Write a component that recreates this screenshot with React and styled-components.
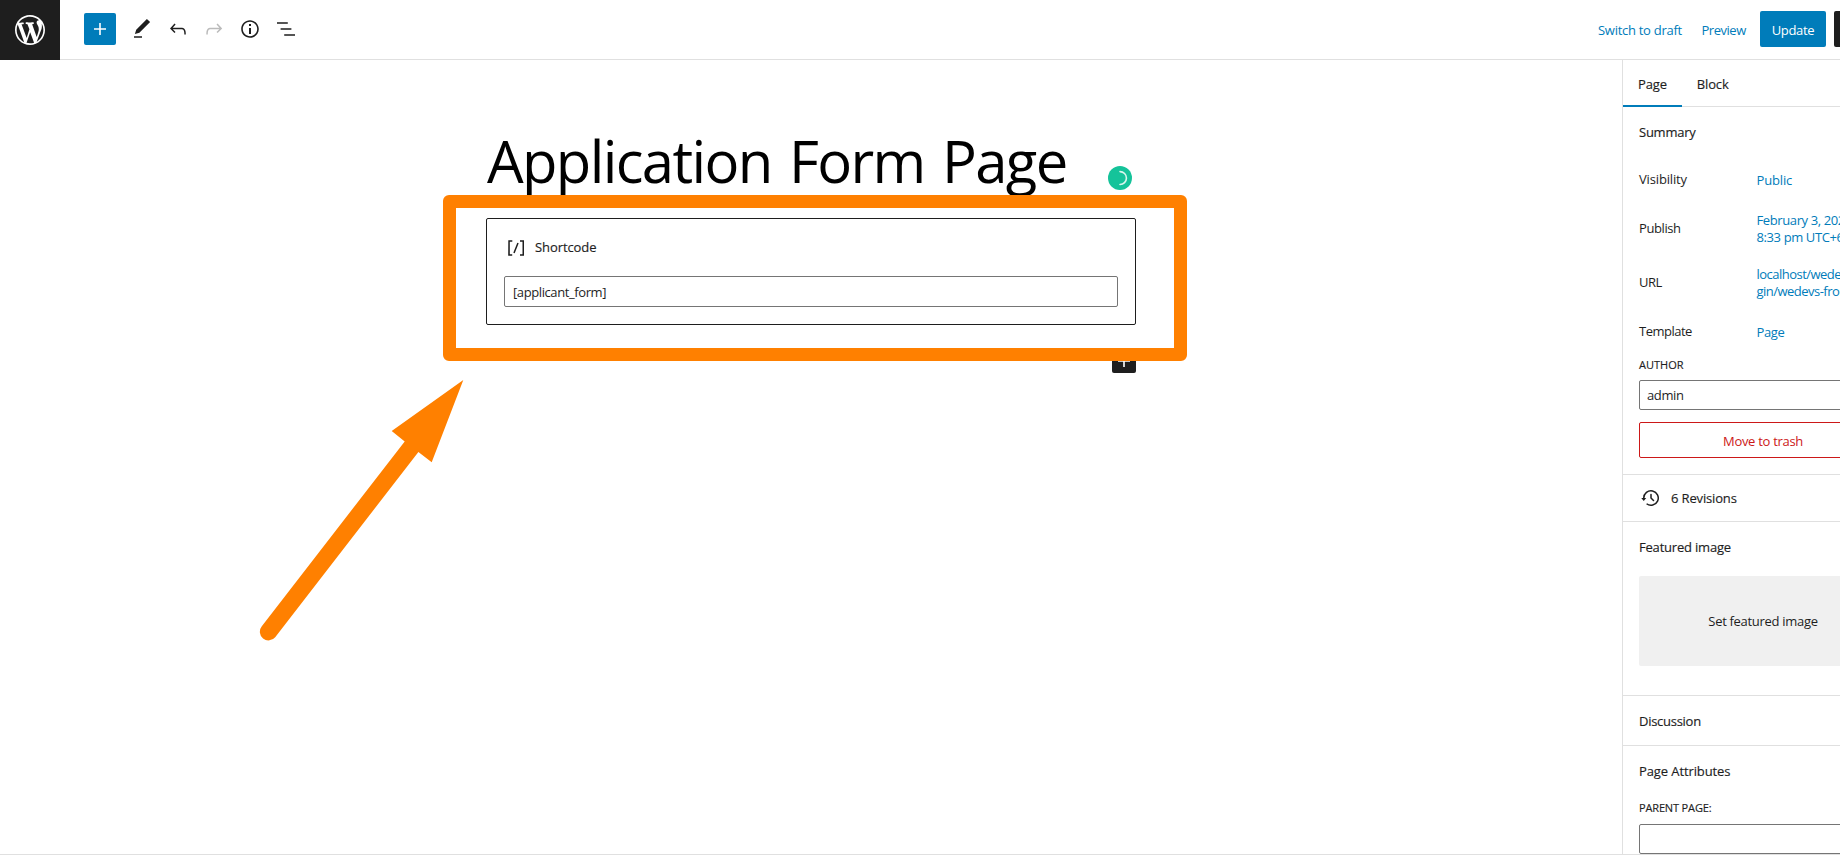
import React from "react";
import styled, { createGlobalStyle } from "styled-components";

const GlobalStyle = createGlobalStyle`
  *, *::before, *::after { box-sizing: border-box; }
  html, body { margin: 0; background: #fff; overflow: hidden; }
  body {
    font-family: "Open Sans", "Noto Sans", sans-serif;
    font-size: 13px;
    color: #1e1e1e;
  }
  button, input { font: inherit; color: inherit; letter-spacing: inherit; margin: 0; }
`;

const BLUE = "#007cba";
const LINE = "#e0e0e0";

const Editor = styled.div`
  position: relative;
  display: flex;
  flex-direction: column;
  width: 1840px;
  height: 863px;
  overflow: hidden;
  background: #fff;
`;

const Header = styled.header`
  display: flex;
  align-items: center;
  flex: none;
  height: 60px;
  border-bottom: 1px solid ${LINE};
`;

const SiteButton = styled.a`
  display: flex;
  align-items: center;
  justify-content: center;
  width: 60px;
  height: 60px;
  margin-bottom: -1px;
  align-self: flex-start;
  background: #1e1e1e;
  color: #fff;
`;

const Tools = styled.div`
  display: flex;
  align-items: center;
  gap: 12px;
  margin: -1px 0 0 24px;
`;

const Inserter = styled.button`
  display: flex;
  align-items: center;
  justify-content: center;
  width: 32px;
  height: 32px;
  margin-right: 2px;
  padding: 0;
  border: 0;
  border-radius: 2px;
  background: ${BLUE};
  color: #fff;
`;

const ToolButton = styled.button`
  display: flex;
  width: 24px;
  height: 24px;
  padding: 0;
  border: 0;
  background: none;
  color: ${(p) => (p.$muted ? "#bbb" : "#1e1e1e")};
`;

const Actions = styled.div`
  display: flex;
  align-items: center;
  gap: 20px;
  width: 242px;
  margin: -2px 0 0 auto;
  overflow: hidden;
`;

const LinkButton = styled.button`
  flex: none;
  width: ${(p) => p.$width}px;
  height: 36px;
  padding: 2px 0 0;
  border: 0;
  background: none;
  color: ${BLUE};
  text-align: left;
  white-space: nowrap;
  letter-spacing: ${(p) => p.$track}px;
`;

const UpdateButton = styled.button`
  flex: none;
  width: 66px;
  height: 36px;
  margin-left: -6px;
  padding: 2px 0 0;
  border: 0;
  border-radius: 2px;
  background: ${BLUE};
  color: #fff;
  letter-spacing: -0.3px;
`;

const SettingsToggle = styled.span`
  flex: none;
  width: 36px;
  height: 36px;
  margin-left: -12px;
  border-radius: 2px;
  background: #1e1e1e;
`;

const Body = styled.div`
  display: flex;
  flex: none;
  height: 795px;
  border-bottom: 1px solid ${LINE};
`;

const Canvas = styled.main`
  width: 1622px;
  padding-top: 60px;
`;

const Content = styled.div`
  position: relative;
  width: 650px;
  margin-left: 486px;
`;

const Title = styled.h1`
  height: 98px;
  margin: 0;
  padding-left: 1px;
  color: #000;
  font-size: 58px;
  font-weight: 400;
  line-height: 82px;
  letter-spacing: -1.65px;
  word-spacing: 4px;
  white-space: nowrap;
`;

const Shortcode = styled.section`
  height: 107px;
  padding: 16px 17px;
  border: 1px solid #1e1e1e;
  border-radius: 2px;
`;

const BlockLabel = styled.div`
  display: flex;
  align-items: center;
  gap: 7px;
  height: 26px;
  margin-bottom: 15px;
  line-height: 22px;
  letter-spacing: -0.08px;
  -webkit-text-stroke: 0.15px currentColor;
`;

const BlockName = styled.span`
  height: 24px;
`;

const Input = styled.input`
  display: block;
  width: 100%;
  height: ${(p) => p.$height}px;
  padding: ${(p) => p.$pad};
  border: 1px solid #757575;
  border-radius: 2px;
  background: #fff;
  letter-spacing: -0.4px;
  outline: none;
`;

const Checker = styled.span`
  position: absolute;
  top: 46px;
  right: 4px;
  display: flex;
  width: 24px;
  height: 24px;
  border-radius: 50%;
  background: #15c39a;
`;

const Appender = styled.button`
  display: flex;
  width: 24px;
  height: 24px;
  margin: 24px 0 0 auto;
  padding: 0;
  border: 0;
  border-radius: 2px;
  background: #1e1e1e;
  color: #fff;
`;

const Highlight = styled.div`
  position: absolute;
  top: 195px;
  left: 443px;
  width: 744px;
  height: 166px;
  border: 13px solid #ff8000;
  border-radius: 6px;
`;

const Pointer = styled.svg`
  position: absolute;
  top: 380px;
  left: 258px;
`;

const Sidebar = styled.aside`
  width: 218px;
  overflow: hidden;
  border-left: 1px solid ${LINE};
`;

const SidebarInner = styled.div`
  width: 280px;
`;

const Tabs = styled.div`
  display: flex;
  height: 47px;
  border-bottom: 1px solid ${LINE};
`;

const Tab = styled.button`
  height: 47px;
  padding: 0 15px 0;
  border: 0;
  background: none;
  letter-spacing: -0.15px;
  -webkit-text-stroke: 0.15px currentColor;
  box-shadow: ${(p) => (p.$active ? `inset 0 -2px 0 0 ${BLUE}` : "none")};
`;

const Panel = styled.section`
  padding: 0 16px ${(p) => p.$bottom || 0}px;
  border-bottom: 1px solid ${LINE};
`;

const PanelTitle = styled.h2`
  display: flex;
  align-items: center;
  height: ${(p) => p.$height || 50}px;
  margin: 0;
  font-size: 13px;
  font-weight: 400;
  letter-spacing: ${(p) => p.$track}px;
  -webkit-text-stroke: 0.15px currentColor;
`;

const Row = styled.div`
  display: flex;
  align-items: center;
  height: ${(p) => p.$height}px;
`;

const RowLabel = styled.span`
  width: 117.5px;
  flex: none;
  padding-bottom: 2px;
  letter-spacing: ${(p) => p.$track}px;
`;

const RowValue = styled.a`
  display: flex;
  flex-direction: column;
  padding-top: 1px;
  color: ${BLUE};
  line-height: 17px;
  white-space: nowrap;
  letter-spacing: ${(p) => p.$track}px;
`;

const FieldLabel = styled.label`
  display: block;
  height: ${(p) => p.$height}px;
  font-size: 11px;
  line-height: 24px;
  letter-spacing: ${(p) => p.$track || 0}px;
  text-transform: uppercase;
  -webkit-text-stroke: 0.15px currentColor;
`;

const TrashButton = styled.button`
  width: 100%;
  height: 36px;
  margin-top: 12px;
  padding: 2px 0 0;
  border: 1px solid #cc1818;
  border-radius: 2px;
  background: none;
  color: #cc1818;
  letter-spacing: -0.3px;
`;

const Revisions = styled.div`
  display: flex;
  align-items: center;
  gap: 8px;
  height: 46px;
  letter-spacing: -0.15px;
  -webkit-text-stroke: 0.15px currentColor;
`;

const FeaturedButton = styled.button`
  width: 100%;
  height: 90px;
  margin-top: 4px;
  padding: 0 0 1px;
  border: 0;
  border-radius: 2px;
  background: #f0f0f0;
  letter-spacing: -0.3px;
`;

function Icon({ d, size = 24, viewBox = "0 0 24 24" }) {
  return (
    <svg width={size} height={size} viewBox={viewBox} fill="currentColor" stroke="none" aria-hidden="true">
      <path d={d} />
    </svg>
  );
}

const icons = {
  wordpress:
    "M20 10c0-5.51-4.49-10-10-10C4.48 0 0 4.49 0 10c0 5.52 4.48 10 10 10 5.51 0 10-4.48 10-10zM7.78 15.37L4.37 6.22c.55-.02 1.17-.08 1.17-.08.5-.06.44-1.13-.06-1.11 0 0-1.45.11-2.37.11-.18 0-.37 0-.58-.01C4.12 2.69 6.87 1.11 10 1.11c2.33 0 4.45.87 6.05 2.34-.68-.11-1.65.39-1.65 1.58 0 .74.45 1.36.9 2.1.35.61.55 1.36.55 2.46 0 1.49-1.4 5-1.4 5l-3.03-8.37c.54-.02.82-.17.82-.17.5-.05.44-1.25-.06-1.22 0 0-1.44.12-2.38.12-.87 0-2.33-.12-2.33-.12-.5-.03-.56 1.2-.06 1.22l.92.08 1.26 3.41zM17.41 10c.24-.64.74-1.87.43-4.25.7 1.29 1.05 2.71 1.05 4.25 0 3.29-1.73 6.24-4.4 7.78.97-2.59 1.94-5.2 2.92-7.78zM6.1 18.09C3.12 16.65 1.11 13.53 1.11 10c0-1.3.23-2.48.72-3.59C3.25 10.3 4.67 14.2 6.1 18.09zm4.03-6.63l2.58 6.98c-.86.29-1.76.45-2.71.45-.79 0-1.57-.11-2.29-.33.81-2.38 1.62-4.74 2.42-7.1z",
  plus: "M18 11.2h-5.2V6h-1.6v5.2H6v1.6h5.2V18h1.6v-5.2H18z",
  edit: "M20.1 5.1L16.9 2 6.2 12.7l-1.3 4.4 4.5-1.3L20.1 5.1zM4 20.8h8v-1.5H4v1.5z",
  undo: "M18.3 11.7c-.6-.6-1.4-.9-2.3-.9H6.7l2.9-3.3-1.1-1-4.5 5L8.5 16l1-1-2.7-2.7H16c.5 0 .9.2 1.3.5 1 1 1 3.4 1 4.5v.3h1.5v-.2c0-1.5 0-4.3-1.5-5.7z",
  redo: "M15.6 6.5l-1.1 1 2.9 3.3H8c-.9 0-1.7.3-2.3.9-1.4 1.5-1.4 4.2-1.4 5.6v.2h1.5v-.3c0-1.1 0-3.5 1-4.5.3-.3.7-.5 1.3-.5h9.2L14.5 15l1.1 1.1 4.6-4.6-4.6-5z",
  info: "M12 3.2c-4.8 0-8.8 3.9-8.8 8.8 0 4.8 3.9 8.8 8.8 8.8 4.8 0 8.8-3.9 8.8-8.8 0-4.8-4-8.8-8.8-8.8zm0 16c-4 0-7.2-3.3-7.2-7.2C4.8 8 8 4.8 12 4.8s7.2 3.3 7.2 7.2c0 4-3.2 7.2-7.2 7.2zM11 17h2v-6h-2v6zm0-8h2V7h-2v2z",
  list: "M13.8 5.2H3v1.5h10.8V5.2zm-3.6 12v1.5H21v-1.5H10.2zm7.2-6H6.6v1.5h10.8v-1.5z",
  shortcode:
    "M16 4.2v1.5h2.5v12.5H16v1.5h4V4.2h-4zM4.2 19.8h4v-1.5H5.8V5.8h2.5V4.2h-4l-.1 15.6zm5.1-3.1l1.4.6 4-10-1.4-.6-4 10z",
  backup:
    "M5.5 12h1.75l-2.5 3-2.5-3H4a8 8 0 113.134 6.35l.907-1.194A6.5 6.5 0 105.5 12zm9.53 1.97l-2.28-2.28V8.5a.75.75 0 00-1.5 0V12a.747.747 0 00.218.529l1.282-.84-1.28.842 2.5 2.5a.75.75 0 101.06-1.061z",
};

const summary = [
  { label: "Visibility", track: -0.15, height: 45, value: ["Public"], valueTrack: -0.15 },
  { label: "Publish", track: -0.4, height: 53, value: ["February 3, 2023", "8:33 pm UTC+6"], valueTrack: -0.39 },
  { label: "URL", track: -0.5, height: 55, value: ["localhost/wedevs-plu", "gin/wedevs-frontend"], valueTrack: -0.52 },
  { label: "Template", track: -0.5, height: 43, value: ["Page"], valueTrack: -0.4 },
];

export default function App() {
  return (
    <Editor>
      <GlobalStyle />
      <Header>
        <SiteButton>
          <Icon d={icons.wordpress} size={36} viewBox="-2 -2 24 24" />
        </SiteButton>
        <Tools>
          <Inserter>
            <Icon d={icons.plus} />
          </Inserter>
          <ToolButton>
            <Icon d={icons.edit} />
          </ToolButton>
          <ToolButton>
            <Icon d={icons.undo} />
          </ToolButton>
          <ToolButton $muted>
            <Icon d={icons.redo} />
          </ToolButton>
          <ToolButton>
            <Icon d={icons.info} />
          </ToolButton>
          <ToolButton>
            <Icon d={icons.list} />
          </ToolButton>
        </Tools>
        <Actions>
          <LinkButton $width={83.5} $track={-0.28}>Switch to draft</LinkButton>
          <LinkButton $width={44.5} $track={-0.48}>Preview</LinkButton>
          <UpdateButton>Update</UpdateButton>
          <SettingsToggle />
        </Actions>
      </Header>

      <Body>
        <Canvas>
          <Content>
            <Title>Application Form Page</Title>
            <Checker>
              <svg width="24" height="24" viewBox="0 0 24 24" fill="none" stroke="#d9f6ee" strokeWidth="1.6">
                <path d="M12 5.6a6.4 6.4 0 0 1 0 12.9" strokeLinecap="round" />
              </svg>
            </Checker>
            <Shortcode>
              <BlockLabel>
                <Icon d={icons.shortcode} />
                <BlockName>Shortcode</BlockName>
              </BlockLabel>
              <Input $height={31} $pad="1px 8px 0" defaultValue="[applicant_form]" />
            </Shortcode>
            <Appender>
              <Icon d={icons.plus} />
            </Appender>
          </Content>
        </Canvas>

        <Sidebar>
          <SidebarInner>
            <Tabs>
              <Tab $active>Page</Tab>
              <Tab>Block</Tab>
            </Tabs>
            <Panel $bottom={16}>
              <PanelTitle $track={-0.25}>Summary</PanelTitle>
              {summary.map((r) => (
                <Row key={r.label} $height={r.height}>
                  <RowLabel $track={r.track}>{r.label}</RowLabel>
                  <RowValue $track={r.valueTrack}>
                    {r.value.map((line) => (
                      <span key={line}>{line}</span>
                    ))}
                  </RowValue>
                </Row>
              ))}
              <FieldLabel $height={27}>Author</FieldLabel>
              <Input $height={30} $pad="0 7px 1px" defaultValue="admin" />
              <TrashButton>Move to trash</TrashButton>
            </Panel>
            <Panel>
              <Revisions>
                <Icon d={icons.backup} />
                6 Revisions
              </Revisions>
            </Panel>
            <Panel $bottom={29}>
              <PanelTitle $track={-0.2}>Featured image</PanelTitle>
              <FeaturedButton>Set featured image</FeaturedButton>
            </Panel>
            <Panel>
              <PanelTitle $height={49} $track={-0.27}>Discussion</PanelTitle>
            </Panel>
            <Panel>
              <PanelTitle $track={-0.1}>Page Attributes</PanelTitle>
              <FieldLabel $height={28} $track={-0.15}>Parent page:</FieldLabel>
              <Input $height={30} $pad="1px 7px 0" />
            </Panel>
          </SidebarInner>
        </Sidebar>
      </Body>

      <Highlight />
      <Pointer width="206" height="262" viewBox="258 380 206 262" fill="#ff8000" aria-hidden="true">
        <path d="M463.3 380L391.7 431L404.7 441.4L261.8 626.3A8.4 8.4 0 0 0 275.2 637.2L418.4 452L431.7 462.3Z" />
      </Pointer>
    </Editor>
  );
}
